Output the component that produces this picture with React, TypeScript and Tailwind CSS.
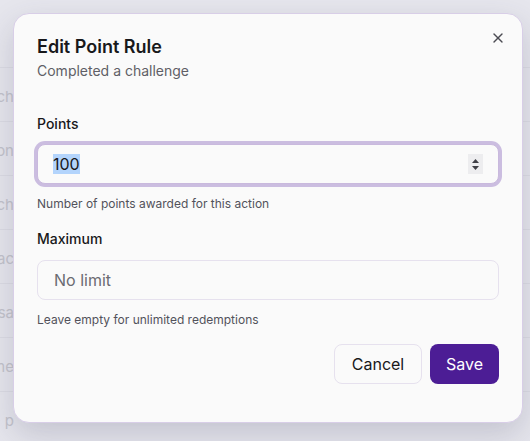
import { X } from "lucide-react";

const rows = ["Search", "Action", "Match", "Pac", "Visa", "Name", "p"];

function Spinner() {
  return (
    <div className="w-[15px] h-[20px] bg-[#ededef] flex flex-col items-center justify-center gap-[3px]">
      <svg width="7" height="4" viewBox="0 0 7 4">
        <path d="M3.5 0L7 4H0z" fill="#3f3f46" />
      </svg>
      <svg width="7" height="4" viewBox="0 0 7 4">
        <path d="M0 0h7L3.5 4z" fill="#3f3f46" />
      </svg>
    </div>
  );
}

export default function App() {
  return (
    <div
      className="relative w-[530px] h-[441px] overflow-hidden bg-[#e6e6ed]"
      style={{ fontFamily: "Inter, 'Noto Sans', sans-serif" }}
    >
      {/* table behind the overlay */}
      <div className="flex flex-col pt-[14px]">
        <div className="h-[54px] border-b border-[#dcdce4]" />
        {rows.map((r) => (
          <div
            key={r}
            className="h-[54px] border-b border-[#dcdce4] flex items-center pt-[6px]"
          >
            <div className="w-[14px] flex justify-end whitespace-nowrap text-[15px] text-[#c3c3cb]">
              {r}
            </div>
          </div>
        ))}
      </div>

      {/* dialog */}
      <div className="absolute left-[13px] top-[13px] w-[510px] h-[410px] rounded-2xl border border-[#d8cee7] bg-[#fafafa] shadow-[0_12px_32px_rgba(60,60,90,0.2)] px-[23px] pt-[19px]">
        <button className="absolute right-[16px] top-[16px] text-[#4b4b52]">
          <X size={16} strokeWidth={2} />
        </button>

        <h2 className="text-[18px] leading-7 font-semibold text-[#18181b]">
          Edit Point Rule
        </h2>
        <p className="text-sm leading-5 text-[#5f5f66]">Completed a challenge</p>

        <div className="mt-[33px] text-sm leading-5 font-medium text-[#18181b]">
          Points
        </div>
        <div className="mt-[10px] h-[40px] rounded-lg border border-[#c9b9dd] ring-[3px] ring-[#cbbde0] bg-[#fafafa] flex items-center justify-between pl-[15px] pr-[15px]">
          <span className="text-base leading-5 text-[#18181b] bg-[#b3d4fc]">100</span>
          <Spinner />
        </div>
        <p className="mt-[12px] text-xs leading-4 text-[#52525b]">
          Number of points awarded for this action
        </p>

        <div className="mt-[17px] text-sm leading-5 font-medium text-[#18181b]">
          Maximum
        </div>
        <div className="mt-[11px] h-[40px] rounded-lg border border-[#e6e1ee] bg-[#fafafa] flex items-center pl-[16px]">
          <span className="text-base text-[#6b6b72]">No limit</span>
        </div>
        <p className="mt-[12px] text-xs leading-4 text-[#52525b]">
          Leave empty for unlimited redemptions
        </p>

        <div className="mt-4 flex justify-end gap-2">
          <button className="h-[40px] w-[88px] rounded-lg border border-[#e6e1ee] bg-[#fafafa] text-base text-[#18181b]">
            Cancel
          </button>
          <button className="h-[40px] w-[69px] rounded-lg bg-[#4c1d95] text-base text-white">
            Save
          </button>
        </div>
      </div>
    </div>
  );
}
